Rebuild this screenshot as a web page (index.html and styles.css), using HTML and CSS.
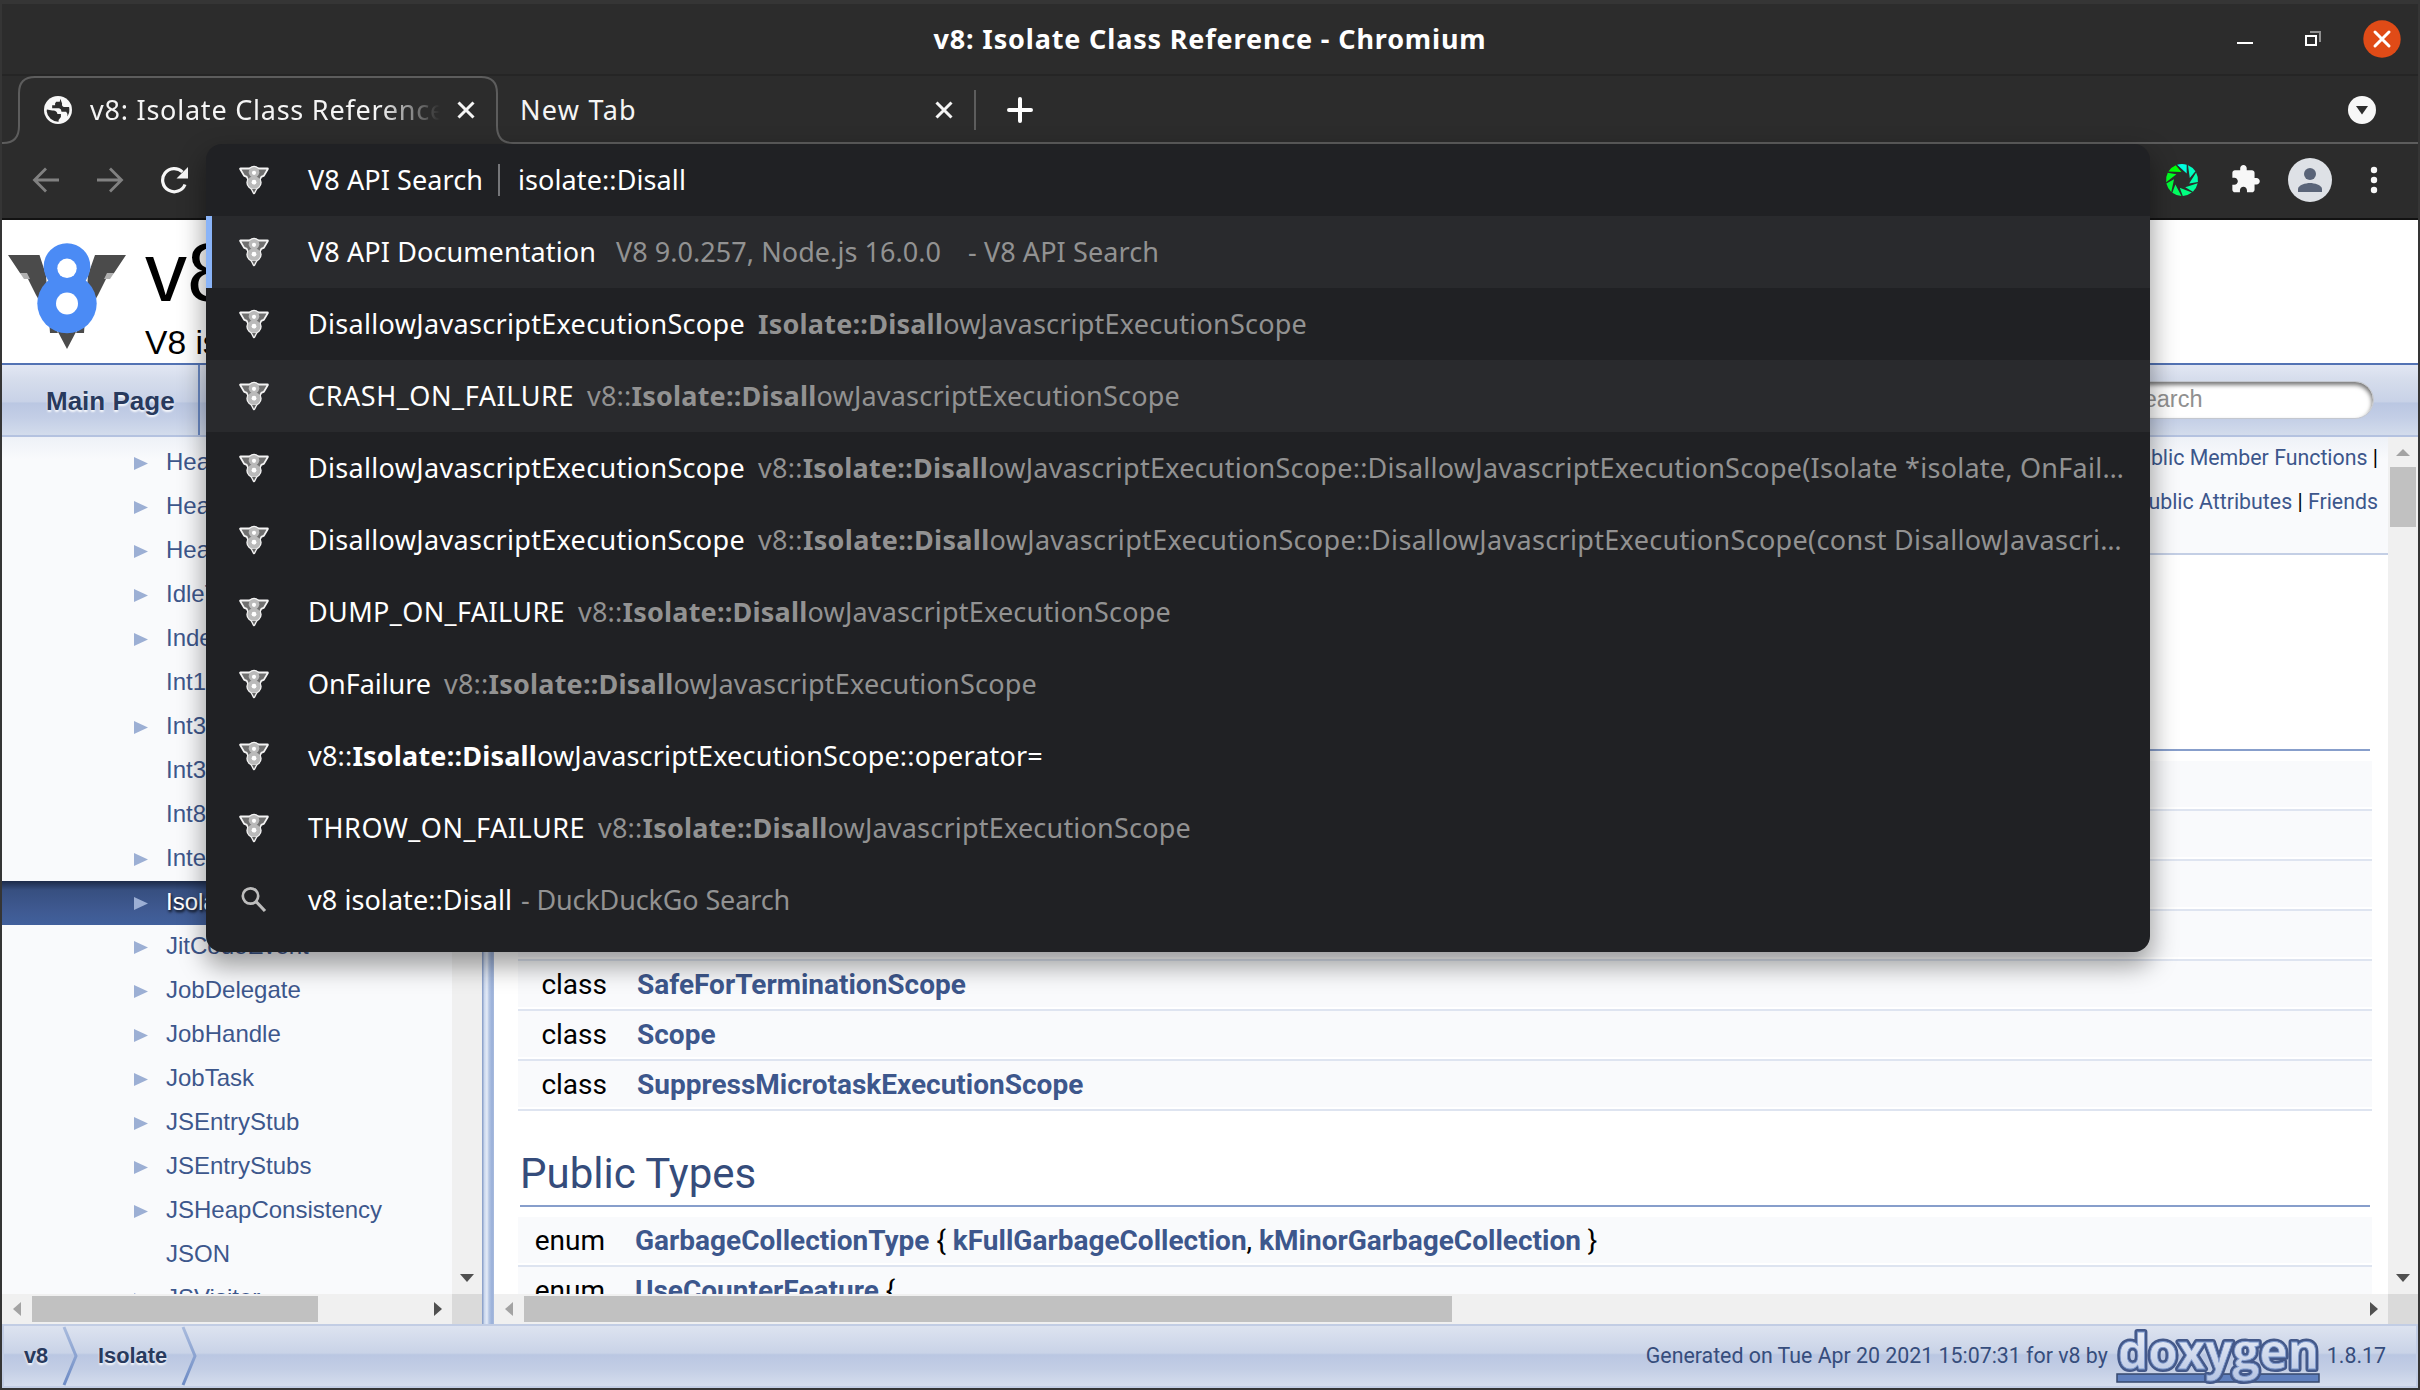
FILE: index.html
```html
<!DOCTYPE html>
<html lang="en">
<head>
<meta charset="utf-8">
<title>v8: Isolate Class Reference - Chromium</title>
<link rel="stylesheet" href="styles.css">
</head>
<body>
<svg class="defs" width="0" height="0">
  <symbol id="v8-mark" viewBox="0 0 32 32">
    <g stroke="#f4f4f4" stroke-width="2.600" stroke-linejoin="round" fill="#757575">
      <path d="M2.500 4.800H29.500L25.500 11.500 23 12.500 20.500 17H11.500L9 12.500 6.500 11.500Z"/><path d="M14 25h4L16 29Z"/>
      <circle cx="16" cy="8.300" r="5.300"/><circle cx="16" cy="18.400" r="6.400"/>
    </g>
    <path d="M3.500 5.500H28.500L25.300 11 22.800 12 20.500 17H11.500L9.200 12 6.700 11Z" fill="#707070"/><path d="M14 25h4L16 28.800Z" fill="#666"/>
    <circle cx="16" cy="8.300" r="5.300" fill="#bababa"/><circle cx="16" cy="18.400" r="6.400" fill="#bababa"/>
    <circle cx="16" cy="8.800" r="2.100" fill="#fff"/><circle cx="16" cy="18.200" r="2.400" fill="#fff"/>
  </symbol>
  <symbol id="x-mark" viewBox="0 0 20 20"><path d="M2.500 2.500 17.500 17.500M17.500 2.500 2.500 17.500" stroke="#f5f5f5" stroke-width="3" fill="none"/></symbol>
</svg>
<div class="window">
  <header class="titlebar">
    <div class="title"><span class="fit" data-w="553">v8: Isolate Class Reference - Chromium</span></div>
    <div class="controls">
      <svg width="20" height="20" viewBox="0 0 20 20"><path d="M2 14h16" stroke="#fff" stroke-width="2"/></svg>
      <svg class="restore" width="20" height="20" viewBox="0 0 20 20"><path d="M7 3h10v10" stroke="#8f8f8f" stroke-width="2" fill="none"/><path d="M3 7h10v9H3Z" stroke="#fff" stroke-width="2" fill="none"/></svg>
      <svg width="38" height="38" viewBox="0 0 38 38"><circle cx="19" cy="19" r="18.700" fill="#e04b17"/><path d="m12 12 14 14m0-14L12 26" stroke="#fff" stroke-width="3" stroke-linecap="round"/></svg>
    </div>
  </header>
  <div class="tabs">
    <svg class="tab-outline" width="2416" height="68" viewBox="0 0 2416 68"><path d="M0 67H1Q17 67 17 50V17Q17 1 33 1H479Q495 1 495 17V50Q495 67 511 67H2416" fill="none" stroke="#5d5d5d" stroke-width="2"/></svg>
    <div class="tab active">
      <svg class="globe" width="28" height="28" viewBox="0 0 24 24"><circle cx="12" cy="12" r="12" fill="#f7f7f7"/><path d="M2.500 11.500 7 12.500Q11 12 11.500 15.500H14.500V18L12.500 20.500V22A10 10 0 0 1 2.300 13ZM14 2.300 13.500 5H10.500Q9 6 9.500 8H7V10.500H13Q15 11 15 13.500H19Q20.500 15 20 17.500A10 10 0 0 0 21.500 9.500H17Q15 9 15.500 6.500Z" fill="#2c2c2c"/></svg>
      <span class="tab-title"><span class="fit" data-w="356">v8: Isolate Class Reference</span></span>
      <svg class="x" width="20" height="20"><use href="#x-mark"/></svg>
    </div>
    <div class="tab">
      <span class="fit tab-name" data-w="117">New Tab</span>
      <svg class="x" width="20" height="20"><use href="#x-mark"/></svg>
    </div>
    <span class="tab-sep"></span>
    <svg class="plus" width="26" height="26" viewBox="0 0 26 26"><path d="M13 2v22M2 13h22" stroke="#fff" stroke-width="4" stroke-linecap="round"/></svg>
    <svg class="tab-search" width="28" height="28" viewBox="0 0 28 28"><circle cx="14" cy="14" r="14" fill="#f7f7f7"/><path d="M8 10h12l-6 8.500Z" fill="#2c2c2c"/></svg>
  </div>
  <div class="toolbar">
    <svg class="nav-icon" width="28" height="28" viewBox="0 0 28 28"><path d="M27 14H3M14 2.500 2.500 14 14 25.500" fill="none" stroke="#818181" stroke-width="2.800"/></svg>
    <svg class="nav-icon" width="28" height="28" viewBox="0 0 28 28"><path d="M1 14H25M14 2.500 25.500 14 14 25.500" fill="none" stroke="#818181" stroke-width="2.800"/></svg>
    <svg class="nav-icon" width="28" height="28" viewBox="0 0 28 28"><path d="M25 18.500A11.600 11.600 0 1 1 22.500 6" fill="none" stroke="#f7f7f7" stroke-width="3.200"/><path d="M28 1V12.500H16.500Z" fill="#f7f7f7"/></svg>
    <div class="extensions">
      <svg width="34" height="34" viewBox="-17 -17 34 34">
        <defs><path id="blade" d="M0-16A16 16 0 0 1 9.200-13.100L6.500-4.700Z"/></defs>
        <use href="#blade" fill="#00ffe0" transform="rotate(-18)"/><use href="#blade" fill="#00ffc2" transform="rotate(22)"/><use href="#blade" fill="#00ffad" transform="rotate(62)"/><use href="#blade" fill="#00ff98" transform="rotate(102)"/><use href="#blade" fill="#00ff80" transform="rotate(142)"/><use href="#blade" fill="#00ff60" transform="rotate(182)"/><use href="#blade" fill="#00ff3c" transform="rotate(222)"/><use href="#blade" fill="#00ff22" transform="rotate(262)"/><use href="#blade" fill="#00ff08" transform="rotate(302)"/>
      </svg>
      <svg width="32" height="32" viewBox="0.200 0.300 24.500 24.500"><path d="M20.500 11H19V7c0-1.100-.9-2-2-2h-4V3.500C13 2.120 11.880 1 10.500 1S8 2.120 8 3.500V5H4c-1.100 0-1.990.9-1.990 2v3.800H3.500c1.490 0 2.700 1.210 2.700 2.700s-1.210 2.700-2.700 2.700H2V20c0 1.100.9 2 2 2h3.800v-1.500c0-1.490 1.210-2.700 2.700-2.700 1.490 0 2.700 1.210 2.700 2.700V22H17c1.100 0 2-.9 2-2v-4h1.500c1.380 0 2.500-1.120 2.500-2.500S21.880 11 20.500 11Z" fill="#f7f7f7"/></svg>
      <svg width="44" height="44" viewBox="0 0 44 44"><circle cx="22" cy="22" r="22" fill="#dee1e6"/><circle cx="22" cy="16" r="6" fill="#5a6478"/><path d="M10 34v-3c0-4 8-6 12-6s12 2 12 6v3Z" fill="#5a6478"/></svg>
      <svg width="8" height="28" viewBox="0 0 8 28"><g fill="#f7f7f7"><circle cx="4" cy="4" r="3.200"/><circle cx="4" cy="14" r="3.200"/><circle cx="4" cy="24" r="3.200"/></g></svg>
    </div>
  </div>

  <main class="page">
    <div class="masthead">
      <svg width="120" height="108" viewBox="7 242 120 108">
        <path d="M8 255H39.500L46 275 50 333H58L36 295 27 277 20 273ZM126 255H95L88 275 84 333H76L98 295 107 277 114 273ZM57 330H77L67 349Z" fill="#4b4b4b"/>
        <path d="M20 273h7l3 6h-6ZM114 273h-7l-3 6h6Z" fill="#b0b0b0"/>
        <circle cx="67" cy="266.500" r="23.300" fill="#4b8bf5"/><circle cx="67" cy="303.500" r="29.700" fill="#4b8bf5"/>
        <circle cx="67" cy="268.300" r="9.700" fill="#fff"/><circle cx="67" cy="303.500" r="11" fill="#fff"/>
      </svg>
      <div class="project"><div class="project-name">v8</div><div class="project-brief">V8 is Google's</div></div>
    </div>
    <nav class="menu">
      <div class="menu-item">Main Page</div>
      <div class="search">Search</div>
    </nav>
    <div class="columns">
      <aside class="sidebar">
        <div class="side-view">
          <ul class="tree">
            <li class="node">HeapProfiler</li><li class="node">HeapSnapshot</li><li class="node">HeapStatistics</li>
            <li class="node">IdleTask</li><li class="node">IndexedProperty</li><li>Int16Array</li><li class="node">Int32</li>
            <li>Int32Array</li><li>Int8Array</li><li class="node">Integer</li><li class="node selected">Isolate</li>
            <li class="node">JitCodeEvent</li><li class="node">JobDelegate</li><li class="node">JobHandle</li>
            <li class="node">JobTask</li><li class="node">JSEntryStub</li><li class="node">JSEntryStubs</li>
            <li class="node">JSHeapConsistency</li><li>JSON</li><li class="node">JSVisitor</li>
          </ul>
          <div class="vbar"><svg class="down" width="16" height="8"><path d="M0 0h14L7 8Z" fill="#505050"/></svg></div>
        </div>
        <div class="hbar">
          <svg width="8" height="14"><path d="M8 0v14L0 7Z" fill="#a3a3a3"/></svg>
          <span class="thumb side-thumb"></span>
          <svg class="right" width="8" height="14"><path d="M0 0v14L8 7Z" fill="#505050"/></svg>
          <span class="corner"></span>
        </div>
      </aside>
      <div class="splitter"></div>
      <section class="content">
        <div class="doc-view">
          <div class="doc">
            <div class="summary">
              <div><a>Public Member Functions</a> |</div>
              <div><a>Static Public Attributes</a> | <a>Friends</a></div>
            </div>
            <h2 class="classes-head">Classes</h2>
            <div class="member"></div><div class="member"></div><div class="member"></div><div class="member"></div>
            <div class="member"><span class="kind">class</span><a>SafeForTerminationScope</a></div>
            <div class="member"><span class="kind">class</span><a>Scope</a></div>
            <div class="member"><span class="kind">class</span><a>SuppressMicrotaskExecutionScope</a></div>
            <h2>Public Types</h2>
            <div class="member enum"><span class="kind">enum</span><span><a>GarbageCollectionType</a> { <a>kFullGarbageCollection</a>, <a>kMinorGarbageCollection</a> }</span></div>
            <div class="member enum"><span class="kind">enum</span><span><a>UseCounterFeature</a> {</span></div>
          </div>
          <div class="vbar wide">
            <svg class="up" width="16" height="8"><path d="M0 7h14L7 0Z" fill="#a3a3a3"/></svg>
            <span class="thumb doc-thumb"></span>
            <svg class="down" width="16" height="8"><path d="M0 0h14L7 8Z" fill="#505050"/></svg>
          </div>
        </div>
        <div class="hbar">
          <svg width="8" height="14"><path d="M8 0v14L0 7Z" fill="#a3a3a3"/></svg>
          <span class="thumb doc-hthumb"></span>
          <svg class="right" width="8" height="14"><path d="M0 0v14L8 7Z" fill="#505050"/></svg>
          <span class="corner"></span>
        </div>
      </section>
    </div>
    <footer class="footer">
      <span class="crumb first">v8</span>
      <svg class="chev" width="16" height="60" viewBox="0 0 16 60"><path d="M2 1 14 30 2 59" fill="none" stroke="url(#chev)" stroke-width="3"/><defs><linearGradient id="chev" x1="0" y1="0" x2="0" y2="1"><stop offset="0" stop-color="#a9bbdd"/><stop offset="1" stop-color="#6c8ac4"/></linearGradient></defs></svg>
      <span class="crumb second">Isolate</span>
      <svg class="chev" width="16" height="60" viewBox="0 0 16 60"><path d="M2 1 14 30 2 59" fill="none" stroke="url(#chev)" stroke-width="3"/></svg>
      <span class="generated fit" data-w="462">Generated on Tue Apr 20 2021 15:07:31 for v8 by</span>
      <svg class="doxygen" width="208" height="60" viewBox="0 0 208 60">
        <defs><linearGradient id="dox" x1="0" y1="0" x2="0" y2="1"><stop offset="0" stop-color="#f6f8fc"/><stop offset="1" stop-color="#b4c3e2"/></linearGradient></defs>
        <rect x="2" y="48" width="202" height="8" fill="#5f7fbd" stroke="#36486e" stroke-width="1.500"/>
        <text x="3" y="43" textLength="201" lengthAdjust="spacingAndGlyphs" class="dox-halo">doxygen</text>
        <text x="3" y="43" textLength="201" lengthAdjust="spacingAndGlyphs" class="dox-text">doxygen</text>
      </svg>
      <span class="version">1.8.17</span>
    </footer>
  </main>
</div>

<div class="omnibox">
  <div class="row input"><svg class="mark" width="32" height="32"><use href="#v8-mark"/></svg><span class="fit w" data-w="175">V8 API Search</span><i class="bar"></i><span class="fit w" data-w="168">isolate::Disall</span></div>
  <div class="row current"><svg class="mark" width="32" height="32"><use href="#v8-mark"/></svg><span class="fit w" data-w="288">V8 API Documentation</span><span class="fit g wide-gap" data-w="325">V8 9.0.257, Node.js 16.0.0</span><span class="fit g source" data-w="191">- V8 API Search</span></div>
  <div class="row"><svg class="mark" width="32" height="32"><use href="#v8-mark"/></svg><span class="fit w" data-w="437">DisallowJavascriptExecutionScope</span><span class="fit g" data-w="549"><b>Isolate::Disall</b>owJavascriptExecutionScope</span></div>
  <div class="row hover"><svg class="mark" width="32" height="32"><use href="#v8-mark"/></svg><span class="fit w" data-w="266">CRASH_ON_FAILURE</span><span class="fit g" data-w="593">v8::<b>Isolate::Disall</b>owJavascriptExecutionScope</span></div>
  <div class="row"><svg class="mark" width="32" height="32"><use href="#v8-mark"/></svg><span class="fit w" data-w="437">DisallowJavascriptExecutionScope</span><span class="fit g" data-w="1366">v8::<b>Isolate::Disall</b>owJavascriptExecutionScope::DisallowJavascriptExecutionScope(Isolate *isolate, OnFail…</span></div>
  <div class="row"><svg class="mark" width="32" height="32"><use href="#v8-mark"/></svg><span class="fit w" data-w="437">DisallowJavascriptExecutionScope</span><span class="fit g" data-w="1364">v8::<b>Isolate::Disall</b>owJavascriptExecutionScope::DisallowJavascriptExecutionScope(const DisallowJavascri…</span></div>
  <div class="row"><svg class="mark" width="32" height="32"><use href="#v8-mark"/></svg><span class="fit w" data-w="257">DUMP_ON_FAILURE</span><span class="fit g" data-w="593">v8::<b>Isolate::Disall</b>owJavascriptExecutionScope</span></div>
  <div class="row"><svg class="mark" width="32" height="32"><use href="#v8-mark"/></svg><span class="fit w" data-w="123">OnFailure</span><span class="fit g" data-w="593">v8::<b>Isolate::Disall</b>owJavascriptExecutionScope</span></div>
  <div class="row"><svg class="mark" width="32" height="32"><use href="#v8-mark"/></svg><span class="fit w" data-w="735">v8::<b>Isolate::Disall</b>owJavascriptExecutionScope::operator=</span></div>
  <div class="row"><svg class="mark" width="32" height="32"><use href="#v8-mark"/></svg><span class="fit w" data-w="277">THROW_ON_FAILURE</span><span class="fit g" data-w="593">v8::<b>Isolate::Disall</b>owJavascriptExecutionScope</span></div>
  <div class="row"><svg class="mark" width="32" height="32" viewBox="0 0 32 32"><circle cx="12.500" cy="12" r="7.700" fill="none" stroke="#bdbdbd" stroke-width="2.700"/><path d="m18 17.500 9 9.500" stroke="#bdbdbd" stroke-width="3.200"/></svg><span class="fit w" data-w="204">v8 isolate::Disall</span><span class="fit g engine" data-w="269">- DuckDuckGo Search</span></div>
</div>
<script src="fit.js"></script>
</body>
</html>
```
FILE: fit.js
```js
// Tracks each label so that it fills its intended width.
document.querySelectorAll('.fit').forEach(function (el) {
  var width = Number(el.dataset.w);
  var natural = el.getBoundingClientRect().width;
  el.style.letterSpacing = (width - natural) / el.textContent.length + 'px';
});
```
FILE: styles.css
```css
* { box-sizing: border-box; }
body {
  margin: 0; width: 2420px; height: 1390px; overflow: hidden; position: relative;
  background: #383838; font-family: "Noto Sans", sans-serif; font-size: 27px; color: #f5f5f5;
}
svg { display: block; flex: none; }
.defs { position: absolute; }
.fit { white-space: pre; flex: none; }
.window { height: 1390px; padding: 4px 2px 2px; display: flex; flex-direction: column; background: #353535; }

.titlebar { height: 72px; flex: none; background: #2c2c2c; border-bottom: 2px solid #252525; display: grid; grid-template-columns: 1fr auto 1fr; align-items: center; }
.title { grid-column: 2; font-weight: 700; line-height: 70px; padding-bottom: 2px; color: #fff; }
.controls { justify-self: end; display: flex; align-items: center; gap: 48px; padding: 0 17px 2px 0; }
.restore { margin-right: -8px; }

.tabs { height: 68px; flex: none; background: #2c2c2c; display: flex; align-items: center; position: relative; }
.tab-outline { position: absolute; left: 0; top: 0; }
.tab { display: flex; align-items: center; width: 478px; padding-left: 23px; height: 68px; }
.tab.active { margin-left: 17px; padding-left: 25px; }
.tab-name { padding-bottom: 2px; }
.tab-title { margin-left: 18px; padding-bottom: 2px; width: 352px; overflow: hidden; -webkit-mask-image: linear-gradient(90deg, #000 290px, transparent 350px); mask-image: linear-gradient(90deg, #000 290px, transparent 350px); }
.tab .x { margin-left: auto; margin-right: 21px; }
.tab-sep { width: 2px; height: 40px; background: #5d5d5d; margin-left: -1px; }
.plus { margin-left: 31px; }
.tab-search { margin-left: auto; margin-right: 42px; }

.toolbar { height: 76px; flex: none; background: #2c2c2c; border-bottom: 2px solid #121212; display: flex; align-items: center; padding-left: 30px; gap: 36px; padding-bottom: 2px; }
.extensions { margin-left: auto; display: flex; align-items: center; padding-right: 40px; }
.extensions svg:nth-child(1) { margin-right: 31px; }
.extensions svg:nth-child(2) { margin-right: 26px; }
.extensions svg:nth-child(3) { margin-right: 38px; }

.page { flex: 1; min-height: 0; background: #fff; color: #000; display: flex; flex-direction: column; }
.masthead { height: 143px; flex: none; display: flex; padding-left: 5px; overflow: hidden; }
.masthead svg { margin-top: 22px; }
.project { margin-left: 18px; font-family: "Liberation Sans", Arial, sans-serif; }
.project-name { font-size: 84px; line-height: 96px; height: 104px; padding-top: 4px; }
.project-brief { font-size: 33.600px; line-height: 38px; }

.menu { height: 74px; flex: none; display: flex; align-items: center; border-top: 2px solid #5373b4; border-bottom: 2px solid #b4c2e0;
  background: linear-gradient(#e2e7f3, #d6ddec 20%, #c8d2e7 53%, #bac7e2 54%, #c3cee6 75%, #d3dcec); }
.menu-item { width: 198px; height: 70px; border-right: 2px solid #6a89c4; padding-left: 44px; font: 700 26px/72px "Liberation Sans", Arial, sans-serif; color: #283a5d; text-shadow: 0 2px 2px rgba(255,255,255,.9); }
.search { margin-left: auto; margin-right: 44px; width: 300px; height: 38px; border-radius: 19px; background: #fff; border: 1px solid #c3c7cf; box-shadow: inset -1px 3px 4px #777; font: 23.500px/34px "Liberation Sans", Arial, sans-serif; color: #909090; padding-left: 53px; }

.columns { height: 887px; flex: none; display: flex; }
.sidebar { width: 480px; display: flex; flex-direction: column; }
.side-view, .doc-view { height: 857px; flex: none; display: flex; overflow: hidden; }
.tree { flex: 1; margin: 0; padding: 4px 0 0; list-style: none; background: linear-gradient(#eef1f7, #f9fafc 22px); font: 24px/42px "Liberation Sans", Arial, sans-serif; color: #3d578c; overflow: hidden; }
.tree li { height: 44px; padding-left: 164px; display: flex; }
.tree .node { padding-left: 132px; }
.tree .node::before { content: ""; width: 14px; height: 13px; margin: 16px 18px 0 0; background: #9cafd4; clip-path: polygon(0 0, 100% 50%, 0 100%); }
.tree .selected { color: #fff; background: linear-gradient(#1d2b49, #374f80 9px, #3f5a92 30px, #41609c); text-shadow: 1px 2px 3px #000; }
.vbar { width: 30px; flex: none; background: #f0f0f0; display: flex; flex-direction: column; align-items: center; padding-bottom: 12px; }
.vbar svg { margin-left: 2px; }
.vbar .down { margin-top: auto; }
.vbar .up { margin-top: 12px; }
.thumb { background: #c1c1c1; }
.doc-thumb { width: 26px; height: 60px; margin-top: 10px; }
.hbar { height: 30px; background: #f0f0f0; display: flex; align-items: center; padding-left: 11px; }
.side-thumb { width: 286px; height: 26px; margin-left: 11px; }
.doc-hthumb { width: 928px; height: 26px; margin-left: 11px; }
.right { margin-left: auto; }
.corner { width: 30px; height: 30px; margin-left: 10px; background: #dadada; }
.splitter { width: 12px; background: linear-gradient(90deg, #8ea3cb 0 1px, #c6d4ec 2px, #e4ebf7 5px, #b5c6e4 7px, #9ab0d9 10px, #a9bbdd); }
.content { flex: 1; min-width: 0; display: flex; flex-direction: column; font-family: Roboto, sans-serif; }
.doc { flex: 1; padding-right: 16px; overflow: hidden; }
.summary { height: 118px; margin-right: -16px; padding: 0 10px 0 24px; text-align: right; font-size: 21.330px; line-height: 44px; border-bottom: 2px solid #c4cfe5; background: linear-gradient(#eef1f7, #f9fafc 22px); }
.summary div:first-child { height: 43px; line-height: 42px; }
.summary a { color: #3d578c; }
.doc h2 { margin: 40px 2px 10px 26px; height: 56px; font-size: 42px; font-weight: 400; line-height: 45px; color: #354c7b; border-bottom: 2px solid #879ecb; }
.doc .classes-head { margin-top: 140px; }
.member { height: 50px; margin-left: 24px; display: flex; align-items: flex-start; font-size: 28px; line-height: 47px; background: linear-gradient(#f9fafc 46px, #fff 46px 48px, #dee4f0 48px); }
.member a { font-weight: 700; color: #3d578c; }
.kind { width: 89px; text-align: right; margin-right: 30px; }
.enum .kind { width: 87px; }
.enum { line-height: 48px; }

.footer { height: 64px; flex: none; display: flex; align-items: center; border: 2px solid #c2cde4; font: 21.330px/30px Roboto, sans-serif; color: #364d7c;
  background: linear-gradient(#dde3f0, #c9d3e7 45%, #bac7e2 48%, #c3cee5 72%, #d5dded); }
.crumb { font: 700 21.800px/30px "Liberation Sans", Arial, sans-serif; color: #283a5d; text-shadow: 0 2px 2px rgba(255,255,255,.9); }
.first { width: 38px; margin-left: 20px; }
.second { width: 84px; margin-left: 19px; padding-left: 1px; }
.generated { margin-left: auto; }
.doxygen { margin-left: 7px; }
.dox-halo, .dox-text { font: 700 49px "Open Sans", sans-serif; }
.dox-halo { fill: #44598a; stroke: #44598a; stroke-width: 6px; stroke-linejoin: round; }
.dox-text { fill: url(#dox); stroke: #7d98cc; stroke-width: .8px; }
.version { margin: 0 30px 0 4px; }

.omnibox { position: absolute; left: 206px; top: 144px; width: 1944px; height: 808px; border-radius: 16px; overflow: hidden; background: #202124; box-shadow: 0 12px 26px 2px rgba(0,0,0,.38); }
.row { height: 72px; display: flex; align-items: center; padding-left: 32px; line-height: 70px; }
.current, .hover { background: #292a2d; }
.current { box-shadow: inset 6px 0 #8ab4f8; }
.mark { margin-right: 38px; }
.w { color: #fff; }
.g { color: #929292; margin-left: 13px; }
.bar { width: 2px; height: 32px; background: #757679; margin: 0 18px 0 15px; }
.wide-gap { margin-left: 20px; }
.source { margin-left: 27px; }
.engine { margin-left: 9px; }
```
